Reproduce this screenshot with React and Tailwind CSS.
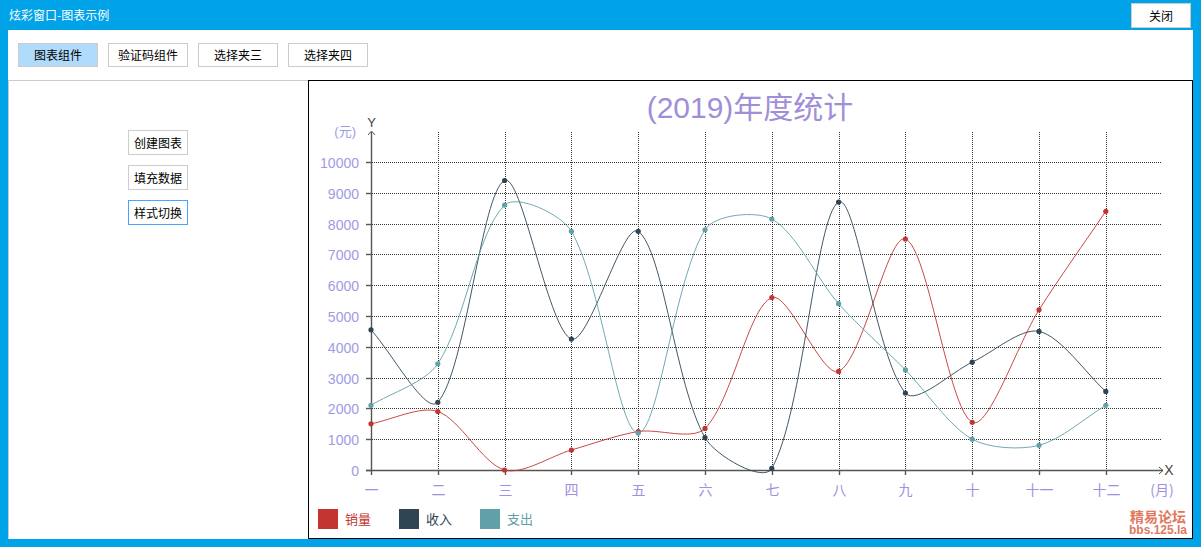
import React from "react";

const months = ["一", "二", "三", "四", "五", "六", "七", "八", "九", "十", "十一", "十二"];

const series = [
  { name: "销量", color: "#c23531", data: [1500, 1900, 0, 650, 1250, 1350, 5600, 3200, 7500, 1550, 5200, 8400] },
  { name: "收入", color: "#2f4554", data: [4550, 2200, 9400, 4250, 7750, 1050, 50, 8700, 2500, 3500, 4500, 2550] },
  { name: "支出", color: "#61a0a8", data: [2100, 3450, 8600, 7750, 1200, 7800, 8150, 5400, 3250, 1000, 800, 2100] },
];

const X0 = 371;
const STEP = 66.8;
const Y0 = 470;
const PER = 0.0308;

const px = (i) => X0 + i * STEP;
const py = (v) => Y0 - v * PER;

// echarts-like smooth curve
function smoothPath(pts, smooth = 0.3) {
  const cps = pts.map((p, i) => {
    const prev = pts[i - 1] || p;
    const next = pts[i + 1] || p;
    const vx = next[0] - prev[0];
    const vy = next[1] - prev[1];
    let a = Math.hypot(p[0] - prev[0], p[1] - prev[1]);
    let b = Math.hypot(next[0] - p[0], next[1] - p[1]);
    const s = a + b;
    if (s) { a /= s; b /= s; }
    return {
      c0: [p[0] - vx * smooth * a, p[1] - vy * smooth * a],
      c1: [p[0] + vx * smooth * b, p[1] + vy * smooth * b],
    };
  });
  let d = `M${pts[0][0]},${pts[0][1]}`;
  for (let i = 1; i < pts.length; i++) {
    const c1 = cps[i - 1].c1;
    const c0 = cps[i].c0;
    d += ` C${c1[0]},${c1[1]} ${c0[0]},${c0[1]} ${pts[i][0]},${pts[i][1]}`;
  }
  return d;
}

function Chart() {
  const ticks = [0, 1, 2, 3, 4, 5, 6, 7, 8, 9, 10];
  return (
    <svg width="883" height="457" viewBox="309 81 883 457" className="block">
      <text x="750" y="118" textAnchor="middle" fill="#a08fd8" fontSize="30" fontFamily="'Liberation Sans', 'Noto Sans CJK SC', sans-serif">
        (2019)年度统计
      </text>

      {/* grid */}
      {ticks.slice(1).map((k) => {
        const y = Math.round(Y0 - k * 1000 * PER) + 0.5;
        return <line key={"h" + k} x1="372" x2="1162" y1={y} y2={y} stroke="#333" strokeWidth="1" strokeDasharray="1 1" />;
      })}
      {months.slice(1).map((m, i) => {
        const x = Math.round(px(i + 1)) + 0.5;
        return <line key={"v" + m} x1={x} x2={x} y1="132" y2="470" stroke="#333" strokeWidth="1" strokeDasharray="1 1" />;
      })}

      {/* axes */}
      <line x1="371.5" x2="371.5" y1="132" y2="471" stroke="#555" strokeWidth="1.4" />
      <polyline points="368,135 371.5,131 375,135" fill="none" stroke="#555" strokeWidth="1" />
      <line x1="366" x2="1163" y1="470.5" y2="470.5" stroke="#555" strokeWidth="1.4" />
      <polyline points="1159,467 1163,470.5 1159,474" fill="none" stroke="#555" strokeWidth="1" />
      <text x="371.5" y="127" textAnchor="middle" fill="#444" fontSize="13" fontFamily="'Liberation Sans', sans-serif">Y</text>
      <text x="1169" y="475" textAnchor="middle" fill="#444" fontSize="14" fontFamily="'Liberation Sans', sans-serif">X</text>
      <text x="356" y="136" textAnchor="end" fill="#9e9be6" fontSize="13" fontFamily="'Liberation Sans', 'Noto Sans CJK SC', sans-serif">(元)</text>

      {ticks.map((k) => {
        const y = Math.round(Y0 - k * 1000 * PER) + 0.5;
        return (
          <g key={"yt" + k}>
            <line x1="366" x2="371" y1={y} y2={y} stroke="#555" strokeWidth="1.4" />
            <text x="359" y={y + 5} textAnchor="end" fill="#9e9be6" fontSize="14" fontFamily="'Liberation Sans', sans-serif">
              {k * 1000}
            </text>
          </g>
        );
      })}
      {months.map((m, i) => {
        const x = Math.round(px(i)) + 0.5;
        return (
          <g key={"xt" + m}>
            <line x1={x} x2={x} y1="470" y2="475" stroke="#555" strokeWidth="1.4" />
            <text x={x} y="495" textAnchor="middle" fill="#a38fe0" fontSize="14" fontFamily="'Noto Sans CJK SC', sans-serif">
              {m}
            </text>
          </g>
        );
      })}
      <text x="1162" y="495" textAnchor="middle" fill="#a38fe0" fontSize="14" fontFamily="'Noto Sans CJK SC', sans-serif">(月)</text>

      {/* series */}
      {series.map((s) => {
        const pts = s.data.map((v, i) => [px(i), py(v)]);
        return (
          <g key={s.name}>
            <path d={smoothPath(pts)} fill="none" stroke={s.color} strokeWidth="1" opacity="0.9" />
            {pts.map((p, i) => (
              <circle key={i} cx={p[0]} cy={p[1]} r="2.6" fill={s.color} />
            ))}
          </g>
        );
      })}

      {/* legend */}
      {series.map((s, i) => {
        const x = 318 + i * 81;
        return (
          <g key={"lg" + s.name}>
            <rect x={x} y="509" width="20" height="20" fill={s.color} />
            <text x={x + 27} y="524" fill={s.color} fontSize="13" fontFamily="'Noto Sans CJK SC', sans-serif">
              {s.name}
            </text>
          </g>
        );
      })}
    </svg>
  );
}

function Btn({ children, active, focus, className = "" }) {
  return (
    <div
      className={
        "flex items-center justify-center text-[12px] text-black border " +
        (focus ? "border-[#4aa3ff] " : "border-[#cccccc] ") +
        (active ? "bg-[#b1dbfb] " : "bg-white ") +
        className
      }
    >
      {children}
    </div>
  );
}

export default function App() {
  return (
    <div
      className="w-[1201px] h-[547px] bg-[#00a2e8] flex flex-col overflow-hidden"
      style={{ fontFamily: "'Noto Sans CJK SC', sans-serif" }}
    >
      <div className="h-[30px] flex items-start justify-between pl-[9px] pr-[10px]">
        <div className="h-[30px] flex items-center text-white text-[12px]">炫彩窗口-图表示例</div>
        <Btn className="w-[60px] h-[25px] mt-[3px]">关闭</Btn>
      </div>
      <div className="mx-[8px] h-[509px] bg-white flex flex-col">
        <div className="h-[50px] flex gap-[10px] pl-[10px] pt-[13px]">
          <Btn active className="w-[80px] h-[24px]">图表组件</Btn>
          <Btn className="w-[80px] h-[24px]">验证码组件</Btn>
          <Btn className="w-[80px] h-[24px]">选择夹三</Btn>
          <Btn className="w-[80px] h-[24px]">选择夹四</Btn>
        </div>
        <div className="flex-1 flex">
          <div className="w-[300px] border-t border-l border-[#cccccc] flex flex-col items-start gap-[10px] pl-[119px] pt-[49px]">
            <Btn className="w-[60px] h-[25px]">创建图表</Btn>
            <Btn className="w-[60px] h-[25px]">填充数据</Btn>
            <Btn focus className="w-[60px] h-[25px]">样式切换</Btn>
          </div>
          <div className="w-[885px] h-[459px] border border-black relative">
            <Chart />
            <div className="absolute right-[5px] bottom-[2px] flex flex-col items-center text-[#e2775e] font-bold">
              <span className="text-[14px] leading-[16px]">精易论坛</span>
              <span className="text-[12px] leading-[12px]" style={{ fontFamily: "'Liberation Sans', sans-serif" }}>bbs.125.la</span>
            </div>
          </div>
        </div>
      </div>
    </div>
  );
}
